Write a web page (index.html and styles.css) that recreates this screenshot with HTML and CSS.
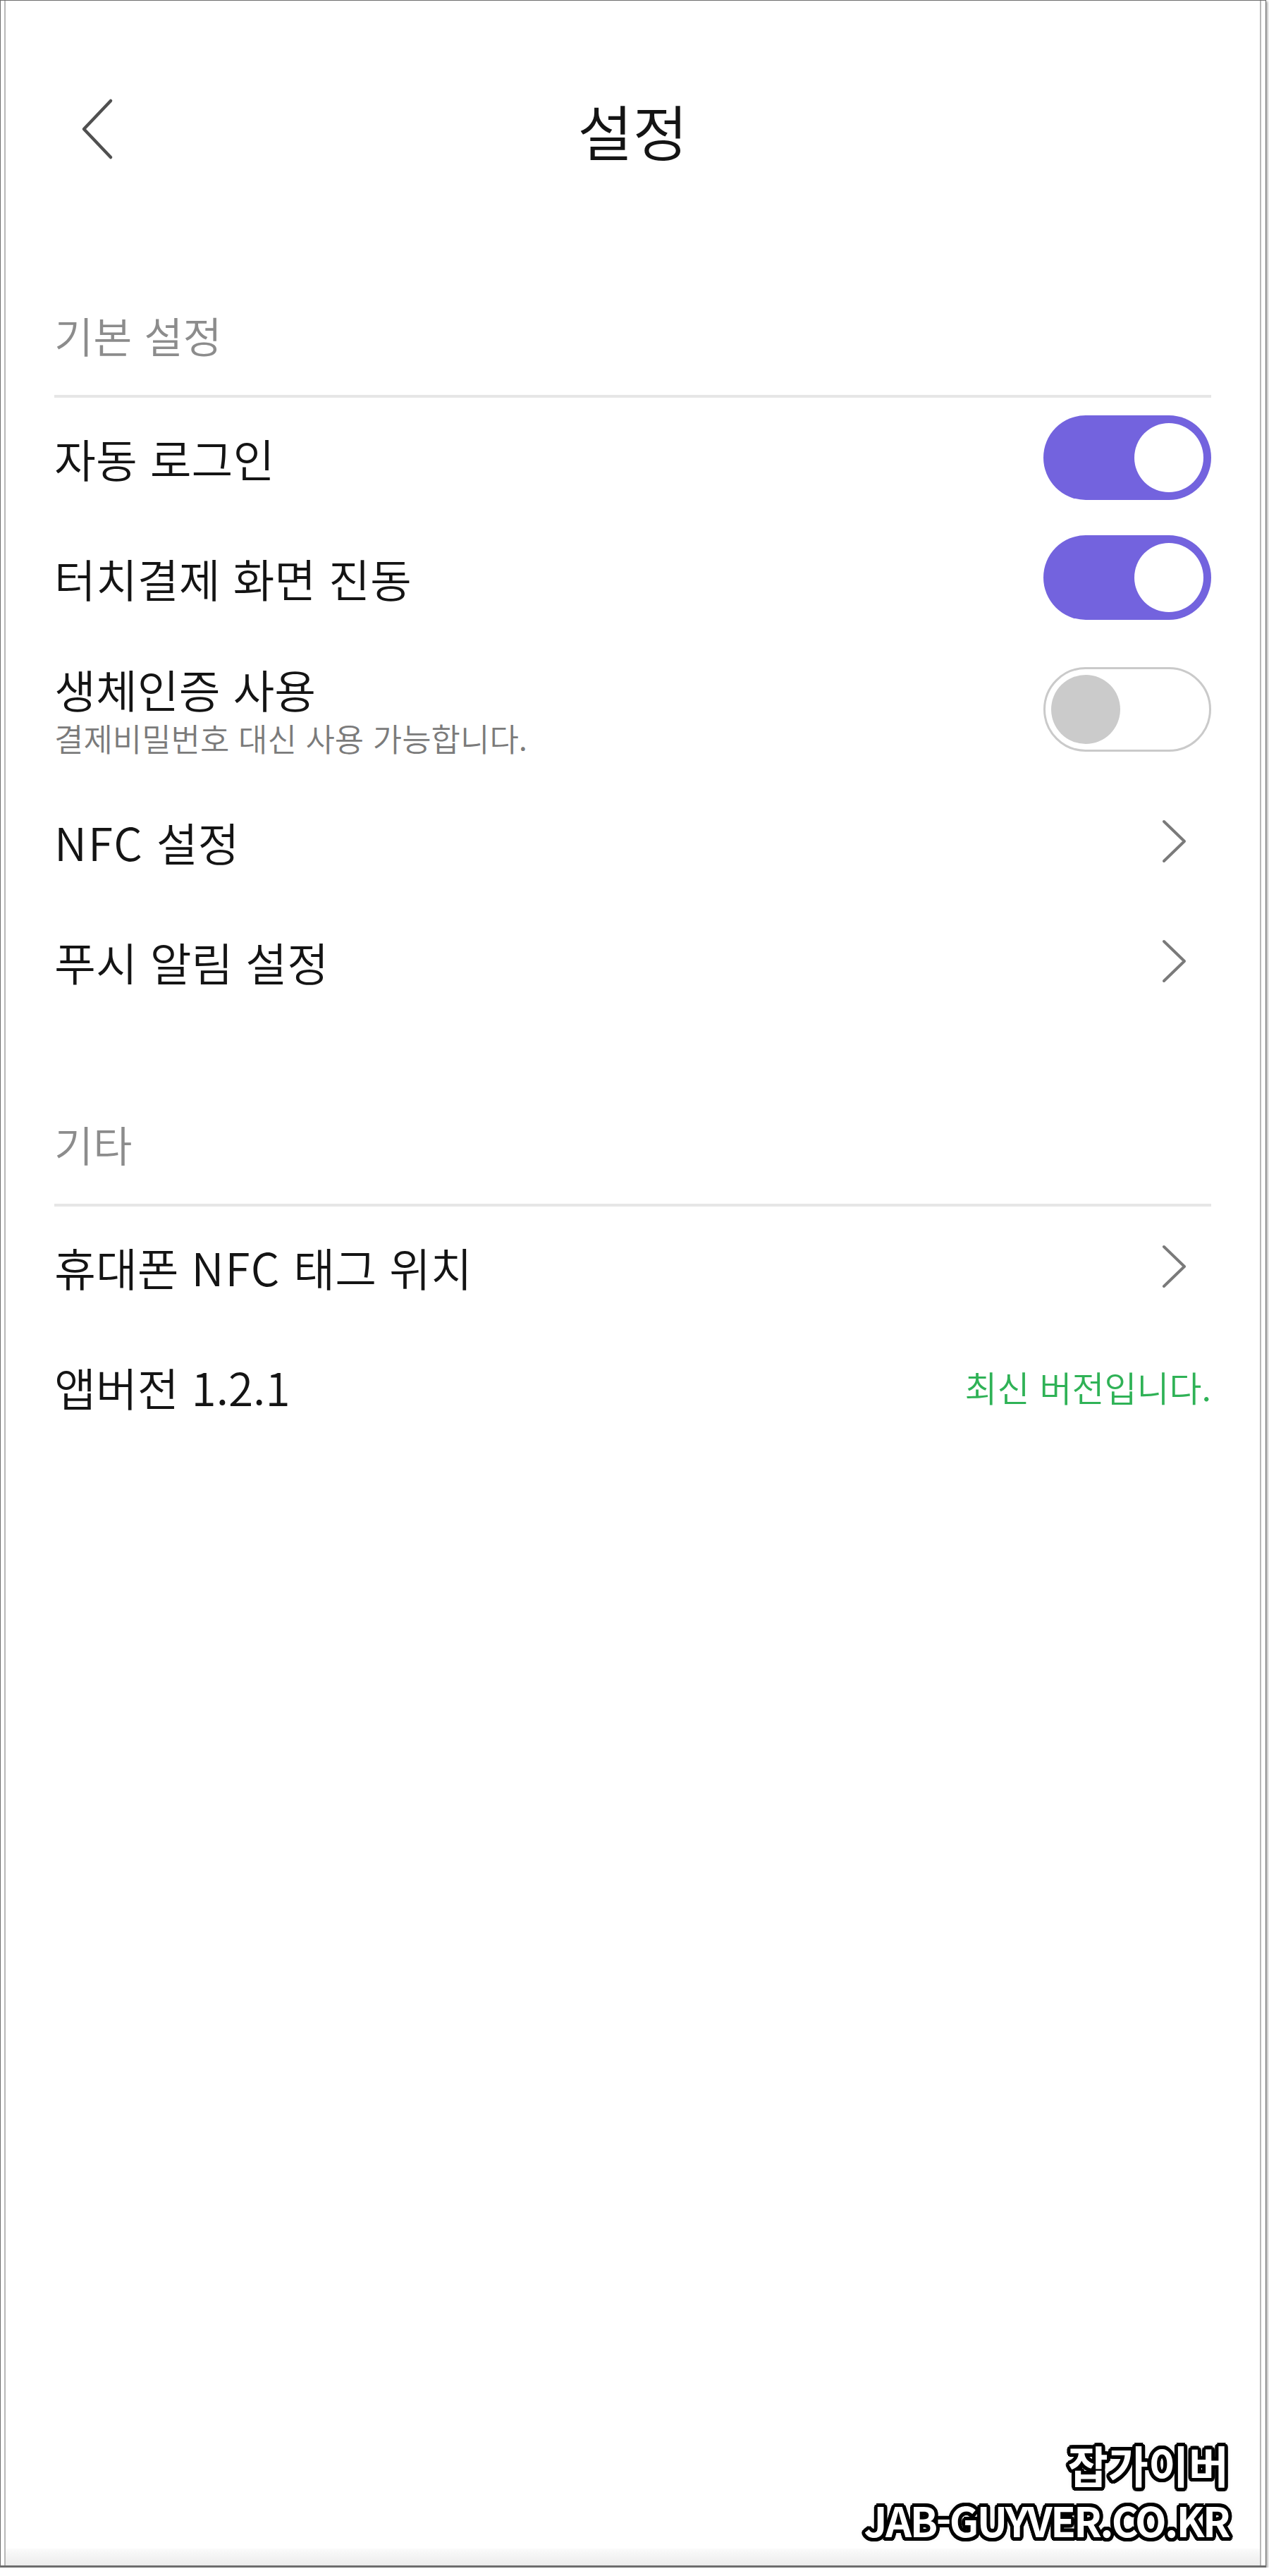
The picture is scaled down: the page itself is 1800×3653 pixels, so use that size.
FILE: index.html
```html
<!DOCTYPE html>
<html lang="ko">
<head>
    <meta charset="UTF-8">
    <meta name="viewport" content="width=device-width, initial-scale=1.0">
    <link rel="stylesheet" href="styles.css">
</head>
<body>
    <div id="frame">
        <div id="phone">
            <header class="topbar">
                <button class="back-button" aria-label="뒤로">
                    <svg width="50" height="90" viewBox="0 0 50 90"><polyline points="44,5 6,45 44,85" /></svg>
                </button>
                <h1>설정</h1>
                <span></span>
            </header>

            <section class="group">
                <h2 class="group-title">기본 설정</h2>
                <div class="row">
                    <span class="row-label">자동 로그인</span>
                    <button class="switch on"><span class="knob"></span></button>
                </div>
                <div class="row">
                    <span class="row-label">터치결제 화면 진동</span>
                    <button class="switch on"><span class="knob"></span></button>
                </div>
                <div class="row row--sub">
                    <div class="row-text">
                        <span class="row-label">생체인증 사용</span>
                        <span class="row-hint">결제비밀번호 대신 사용 가능합니다.</span>
                    </div>
                    <button class="switch off"><span class="knob"></span></button>
                </div>
                <a class="row" href="#">
                    <span class="row-label"><span class="latin">NFC</span> 설정</span>
                    <svg class="arrow" width="40" height="66" viewBox="0 0 40 66"><polyline points="7,5 36,33 7,61" /></svg>
                </a>
                <a class="row" href="#">
                    <span class="row-label">푸시 알림 설정</span>
                    <svg class="arrow" width="40" height="66" viewBox="0 0 40 66"><polyline points="7,5 36,33 7,61" /></svg>
                </a>
            </section>

            <section class="group">
                <h2 class="group-title">기타</h2>
                <a class="row" href="#">
                    <span class="row-label">휴대폰 <span class="latin">NFC</span> 태그 위치</span>
                    <svg class="arrow" width="40" height="66" viewBox="0 0 40 66"><polyline points="7,5 36,33 7,61" /></svg>
                </a>
                <div class="row">
                    <span class="row-label">앱버전 1.2.1</span>
                    <span class="version-note">최신 버전입니다.</span>
                </div>
            </section>

            <div class="spacer"></div>
            <div class="navbar"></div>
        </div>

        <div class="watermark">
            <div class="wm-ko">잡가이버</div>
            <div class="wm-en">JAB-GUYVER.CO.KR</div>
        </div>
    </div>

    <script>
        document.querySelectorAll(".switch").forEach(sw => {
            sw.onclick = () => {
                sw.classList.toggle("on");
                sw.classList.toggle("off");
            };
        });
    </script>
</body>
</html>
```

FILE: styles.css
```css
/* Global Styling */
* {
    margin: 0;
    padding: 0;
    box-sizing: border-box;
}
body {
    font-family: "Noto Sans CJK KR DemiLight", "Noto Sans CJK KR", "Noto Sans", sans-serif;
    font-weight: 300;
    background-color: #fff;
    color: #141414;
}
a {
    color: inherit;
    text-decoration: none;
}
button {
    font: inherit;
    cursor: pointer;
}

/* Screenshot Frame */
#frame {
    position: relative;
    width: 1796px;
    height: 3641px;
    border: 1px solid #6e6e6e;
    border-bottom-width: 3px;
    padding: 0 6px 0 5px;
    box-shadow: 2px 2px 3px rgba(0, 0, 0, 0.35);
}
#phone {
    height: 100%;
    display: flex;
    flex-direction: column;
    border-left: 2px solid #b8b8b8;
    border-right: 2px solid #b8b8b8;
}

/* Top Bar */
.topbar {
    height: 364px;
    display: grid;
    grid-template-columns: 1fr auto 1fr;
    align-items: center;
    padding: 0 69px;
}
.back-button {
    justify-self: start;
    display: flex;
    margin-left: 36px;
    background: none;
    border: none;
}
.back-button polyline {
    fill: none;
    stroke: #505050;
    stroke-width: 4.5;
    stroke-linecap: round;
    stroke-linejoin: round;
}
h1 {
    font-size: 85px;
    font-weight: 300;
    line-height: 1;
}

/* Groups and Rows */
.group {
    padding: 0 69px;
}
.group + .group {
    margin-top: 64px;
}
.group-title {
    font-size: 60px;
    font-weight: 300;
    line-height: 60px;
    color: #8c8c8c;
    padding: 80px 0 55px;
    border-bottom: 4px solid #e6e6e6;
}
.row {
    height: 170px;
    display: flex;
    align-items: center;
    justify-content: space-between;
}
.row-label {
    font-size: 64px;
    line-height: 68px;
}
.latin {
    letter-spacing: 2px;
}
.row--sub {
    height: 204px;
}
.row-text {
    display: flex;
    flex-direction: column;
    gap: 12px;
}
.row-hint {
    font-size: 45px;
    line-height: 49px;
    color: #7b7b7b;
}
.arrow {
    margin-right: 34px;
}
.arrow polyline {
    fill: none;
    stroke: #7a7a7a;
    stroke-width: 4;
    stroke-linecap: round;
    stroke-linejoin: round;
}
.version-note {
    font-size: 50px;
    line-height: 56px;
    color: #2fb256;
}

/* Switch */
.switch {
    width: 238px;
    height: 120px;
    border-radius: 60px;
    padding: 11px;
    display: flex;
    border: none;
}
.switch .knob {
    width: 98px;
    height: 98px;
    border-radius: 50%;
}
.switch.on {
    background-color: #7363de;
    justify-content: flex-end;
}
.switch.on .knob {
    background-color: #fff;
}
.switch.off {
    background-color: #fff;
    border: 3px solid #cacaca;
    padding: 8px;
    justify-content: flex-start;
}
.switch.off .knob {
    background-color: #cbcbcb;
}

/* Bottom */
.spacer {
    flex: 1;
}
.navbar {
    height: 24px;
    background: linear-gradient(#fbfbfb, #ececec);
}

/* Watermark */
.watermark {
    position: absolute;
    right: 52px;
    bottom: 27px;
    text-align: right;
    font-family: "Noto Sans CJK KR", "Noto Sans", sans-serif;
    font-weight: 700;
    color: #fff;
    text-shadow:
        5px 0 0 #000, -5px 0 0 #000, 0 5px 0 #000, 0 -5px 0 #000,
        3.5px 3.5px 0 #000, -3.5px 3.5px 0 #000, 3.5px -3.5px 0 #000, -3.5px -3.5px 0 #000,
        4.6px 1.9px 0 #000, 1.9px 4.6px 0 #000, -1.9px 4.6px 0 #000, -4.6px 1.9px 0 #000,
        -4.6px -1.9px 0 #000, -1.9px -4.6px 0 #000, 1.9px -4.6px 0 #000, 4.6px -1.9px 0 #000,
        0 0 9px rgba(0, 0, 0, 0.4);
}
.wm-ko {
    font-size: 62px;
    line-height: 80px;
}
.wm-en {
    font-size: 58px;
    line-height: 76px;
    letter-spacing: -2.5px;
}
```
